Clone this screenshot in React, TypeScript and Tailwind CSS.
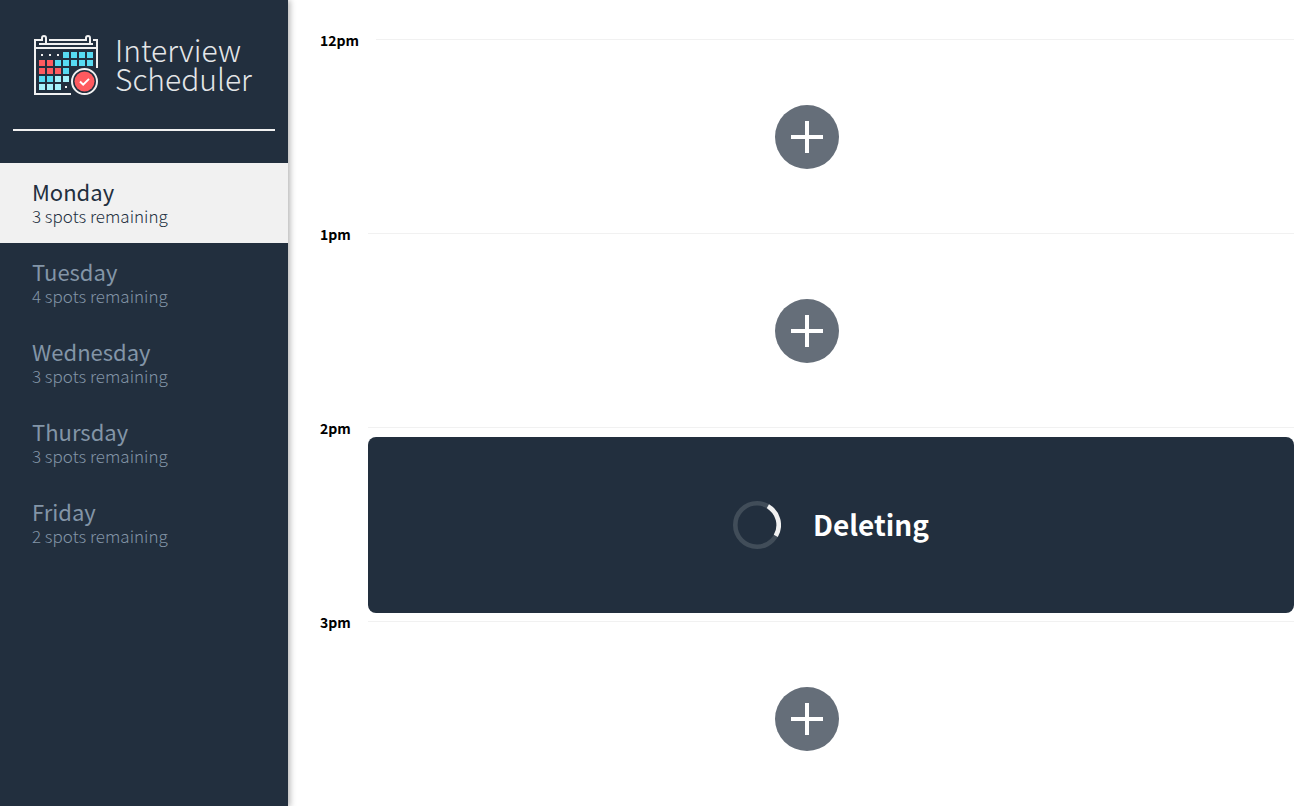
const days = [
  { name: "Monday", spots: 3 },
  { name: "Tuesday", spots: 4 },
  { name: "Wednesday", spots: 3 },
  { name: "Thursday", spots: 3 },
  { name: "Friday", spots: 2 },
];

const slots = [
  { time: "12pm", status: "empty" },
  { time: "1pm", status: "empty" },
  { time: "2pm", status: "deleting" },
  { time: "3pm", status: "empty" },
];

// Calendar cells, one string per week: w = dot, c = cyan, r = red, l = light cyan
const weeks = ["wwwcccc", "rrccccc", "rrrc", "ccll", "lllw"];
const cellColors: Record<string, string> = {
  w: "#f1f1f1",
  c: "#57dbf2",
  r: "#ff5a5f",
  l: "#a5f2fb",
};

function CalendarIcon() {
  return (
    <svg className="size-[66px] shrink-0" viewBox="0 0 66 66" fill="none" aria-hidden="true">
      <g stroke="#f1f1f1" strokeWidth="2">
        <path d="M9 5H2v54h36M16 5h37M60 5h4v28" />
        <path d="M2 13h62M6 9h54" />
        <path d="M9 6V3a2 2 0 0 1 4 0v6M53 6V3a2 2 0 0 1 4 0v6" />
      </g>
      {weeks.map((week, row) =>
        week.split("").map((cell, col) =>
          cell === "w" ? (
            <rect key={`${row}-${col}`} x={8 + col * 8} y={19 + row * 8} width="2" height="2" fill={cellColors.w} />
          ) : (
            <rect key={`${row}-${col}`} x={6 + col * 8} y={17 + row * 8} width="6" height="6" fill={cellColors[cell]} />
          ),
        ),
      )}
      <circle cx="51.500" cy="46.500" r="14" fill="#222f3e" />
      <circle cx="51.500" cy="46.500" r="12.500" stroke="#f1f1f1" strokeWidth="2" />
      <circle cx="51.500" cy="46.500" r="10" fill="#ff5a5f" />
      <path d="M47 46.500l3.200 3.200 5.800-5.800" stroke="#fff" strokeWidth="2" />
    </svg>
  );
}

function Spinner() {
  return (
    <svg className="size-12" viewBox="0 0 48 48" fill="none" aria-hidden="true">
      <circle cx="24" cy="24" r="21.700" stroke="#414d59" strokeWidth="4.600" />
      <path d="M34.850 5.200A21.700 21.700 0 0 1 42.800 34.850" stroke="#f1f1f1" strokeWidth="4.600" />
    </svg>
  );
}

function AddButton() {
  return (
    <div className="flex h-44 items-center justify-center pr-12">
      <button type="button" aria-label="Add appointment" className="size-16 rounded-full bg-[#656e79]">
        <svg className="size-16" viewBox="0 0 64 64" aria-hidden="true">
          <path d="M16 32h32M32 16v32" stroke="#fff" strokeWidth="4" />
        </svg>
      </button>
    </div>
  );
}

export default function App() {
  return (
    <div className="flex min-h-screen bg-white font-['Noto_Sans_CJK_SC',sans-serif]">
      <aside className="z-10 w-72 shrink-0 bg-[#222f3e] shadow-[2px_0_6px_rgba(0,0,0,0.3)]">
        <div className="flex items-start gap-4 pt-[35px] pl-[33px]">
          <CalendarIcon />
          <div className="text-[30px] leading-[29px] font-light text-[#e4e6e8]">
            Interview
            <br />
            Scheduler
          </div>
        </div>
        <hr className="mx-[13px] mt-7 mb-8 border-t-2 border-[#f1f1f1]" />
        <nav>
          <ul>
            {days.map((day, i) => (
              <li key={day.name}>
                <button
                  type="button"
                  className={
                    i === 0
                      ? "flex h-20 w-full flex-col items-start justify-center bg-[#f1f1f1] px-8 pt-0.5 text-[#222f3e]"
                      : "flex h-20 w-full flex-col items-start justify-center px-8 pt-0.5 text-[#8395a7]"
                  }
                >
                  <span className="text-[22px] leading-6">{day.name}</span>
                  <span className="text-[17px] leading-[26px] font-light">{day.spots} spots remaining</span>
                </button>
              </li>
            ))}
          </ul>
        </nav>
      </aside>
      <main className="flex-1 pt-[31px] pr-[5px] pl-8">
        {slots.map((slot) => (
          <article key={slot.time}>
            <header className="flex h-[18px] items-start">
              <h2 className="text-sm leading-[18px] font-bold text-black">{slot.time}</h2>
              <div className="mt-2 ml-[17px] h-px flex-1 bg-[#f1f1f1]" />
            </header>
            {slot.status === "deleting" ? (
              <div className="ml-12 flex h-44 items-center justify-center gap-8 rounded-lg bg-[#222f3e]">
                <Spinner />
                <p className="pb-0.5 text-[28px] leading-8 font-bold text-white">Deleting</p>
              </div>
            ) : (
              <div className="ml-12">
                <AddButton />
              </div>
            )}
          </article>
        ))}
      </main>
    </div>
  );
}
